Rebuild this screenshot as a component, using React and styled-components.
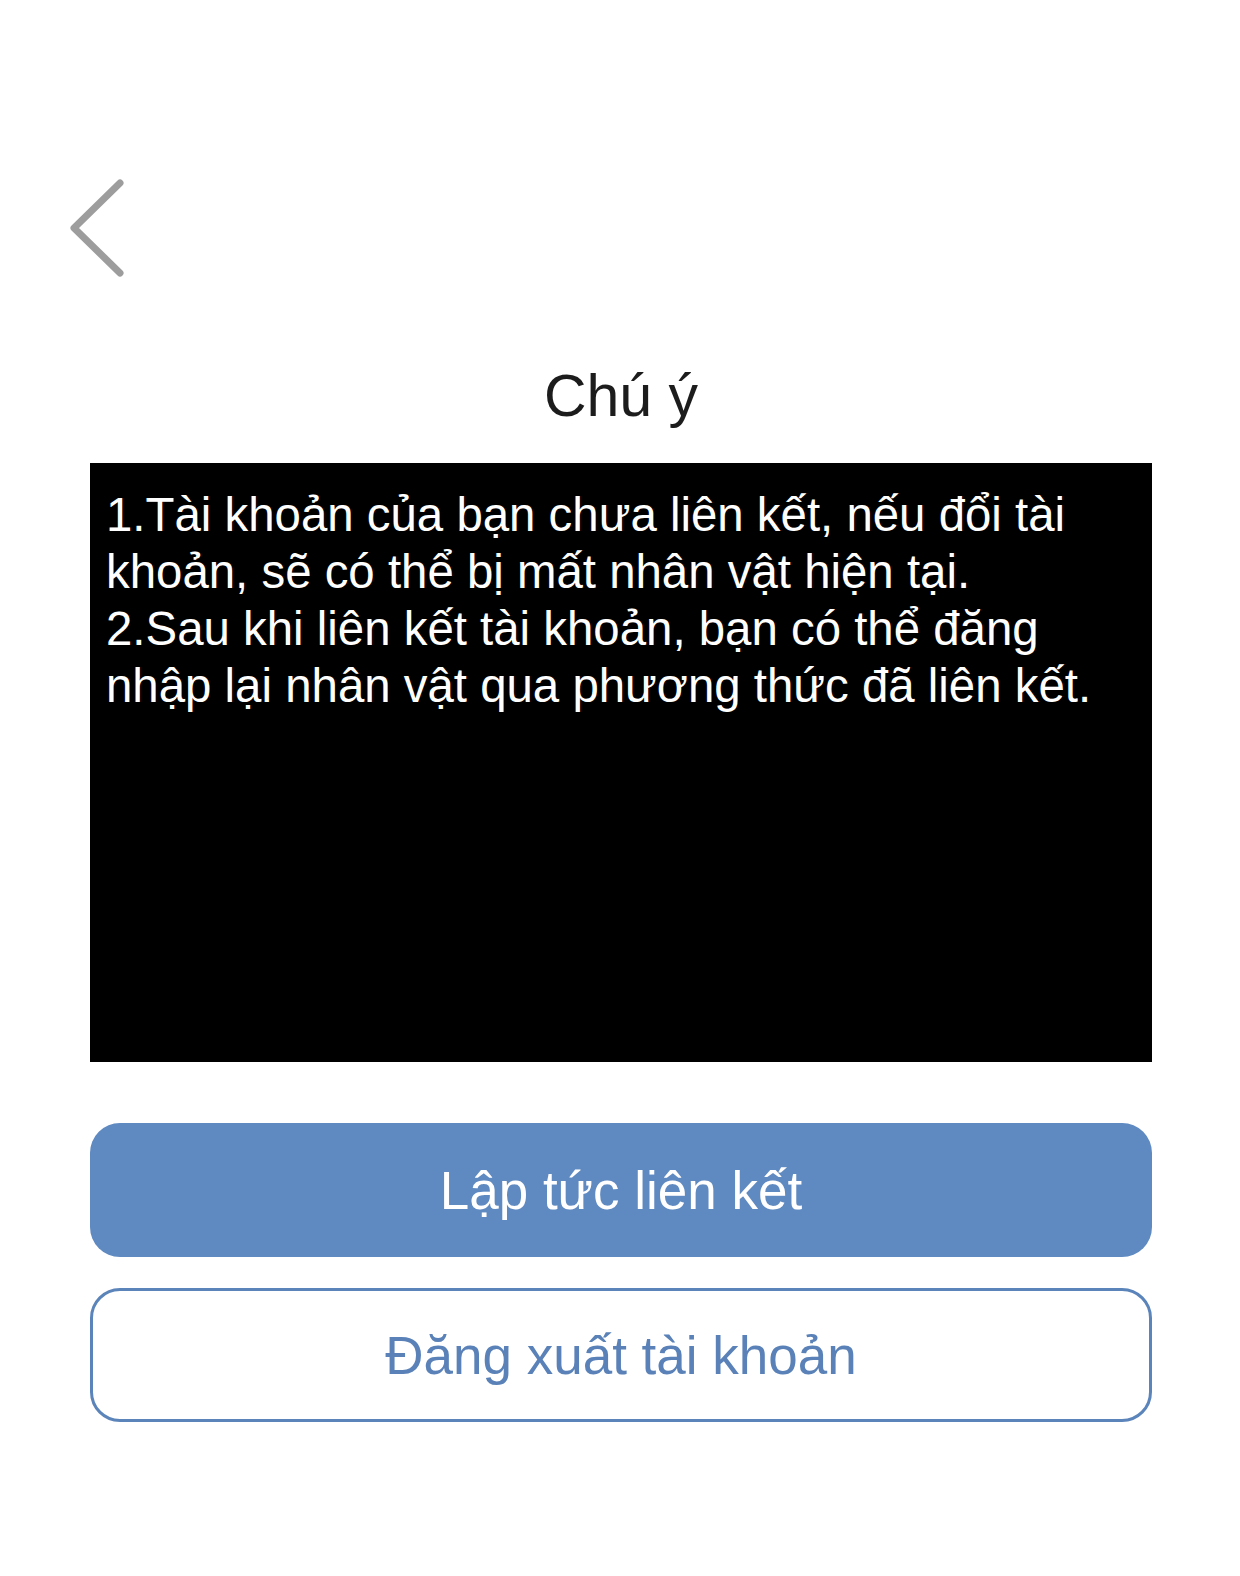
import styled, { createGlobalStyle } from "styled-components";

const GlobalStyle = createGlobalStyle`
  html, body {
    margin: 0;
    padding: 0;
    background: #fff;
  }

  body {
    font-family: "Liberation Sans", Arial, sans-serif;
    -webkit-font-smoothing: antialiased;
  }
`;

const Screen = styled.div`
  min-height: 1576px;
  display: flex;
  flex-direction: column;
  background: #fff;
`;

const TopBar = styled.div`
  display: flex;
  align-items: flex-start;
  padding: 179px 0 0 68px;
`;

const BackButton = styled.button`
  display: flex;
  padding: 0;
  border: none;
  background: none;
  cursor: pointer;
`;

const Content = styled.main`
  display: flex;
  flex-direction: column;
  padding: 0 88px 0 90px;
`;

const Title = styled.h1`
  margin: 79px 0 27px;
  font-size: 59px;
  line-height: 80px;
  font-weight: 400;
  text-align: center;
  color: #1c1c1c;
`;

const Notice = styled.div`
  height: 599px;
  box-sizing: border-box;
  padding: 23px 16px;
  background: #000;
  color: #fff;
`;

const NoticeLine = styled.p`
  margin: 0;
  font-size: 47.4px;
  line-height: 57px;
  white-space: nowrap;
`;

const Actions = styled.div`
  display: flex;
  flex-direction: column;
  gap: 31px;
  margin-top: 61px;
`;

const ActionButton = styled.button`
  height: 134px;
  border-radius: 30px;
  font-family: inherit;
  font-size: 53px;
  cursor: pointer;
  background: ${({ $outline }) => ($outline ? "#fff" : "#5e89c1")};
  color: ${({ $outline }) => ($outline ? "#5a82b8" : "#fff")};
  border: ${({ $outline }) => ($outline ? "3px solid #5b84ba" : "none")};
`;

function ChevronLeft() {
  return (
    <svg width="58" height="98" viewBox="0 0 58 98" fill="none">
      <path
        d="M52 4L6 49L52 94"
        stroke="#9d9d9d"
        strokeWidth="7"
        strokeLinecap="round"
        strokeLinejoin="round"
      />
    </svg>
  );
}

export default function App() {
  return (
    <>
      <GlobalStyle />
      <Screen>
        <TopBar>
          <BackButton aria-label="Quay lại">
            <ChevronLeft />
          </BackButton>
        </TopBar>
        <Content>
          <Title>Chú ý</Title>
          <Notice>
            <NoticeLine>
              1.Tài khoản của bạn chưa liên kết, nếu đổi tài
              <br />
              khoản, sẽ có thể bị mất nhân vật hiện tại.
            </NoticeLine>
            <NoticeLine>
              2.Sau khi liên kết tài khoản, bạn có thể đăng
              <br />
              nhập lại nhân vật qua phương thức đã liên kết.
            </NoticeLine>
          </Notice>
          <Actions>
            <ActionButton>Lập tức liên kết</ActionButton>
            <ActionButton $outline>Đăng xuất tài khoản</ActionButton>
          </Actions>
        </Content>
      </Screen>
    </>
  );
}
